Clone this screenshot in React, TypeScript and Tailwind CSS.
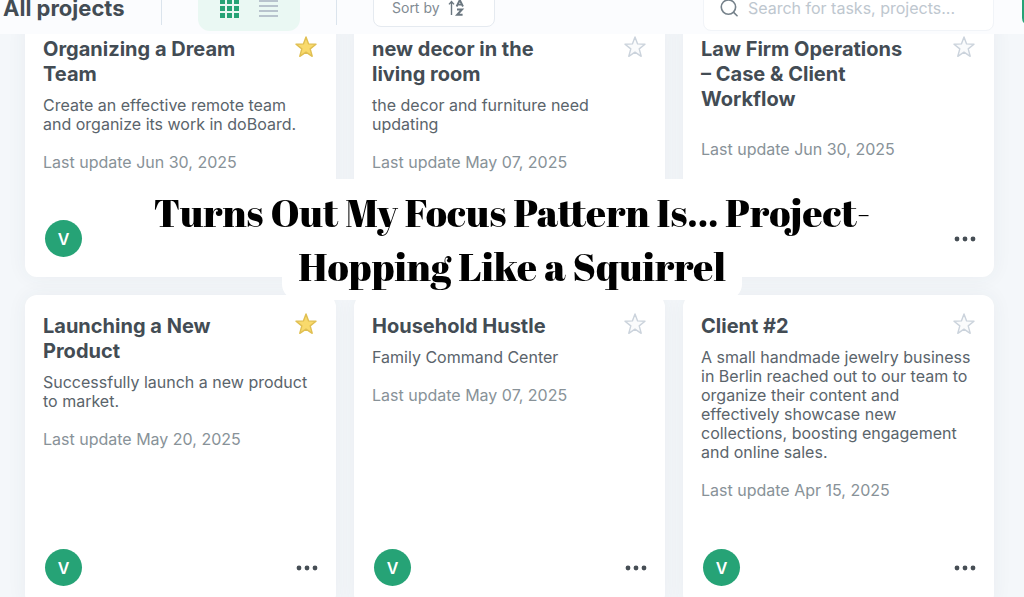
import React, { useState } from 'react';

interface Project {
  id: number;
  title: string;
  description?: string;
  updated: string;
  starred: boolean;
  owner?: string;
}

const initialProjects: Project[] = [
  {
    id: 1,
    title: 'Organizing a Dream Team',
    description: 'Create an effective remote team and organize its work in doBoard.',
    updated: 'Jun 30, 2025',
    starred: true,
    owner: 'V',
  },
  {
    id: 2,
    title: 'new decor in the living room',
    description: 'the decor and furniture need updating',
    updated: 'May 07, 2025',
    starred: false,
  },
  { id: 3, title: 'Law Firm Operations – Case & Client Workflow', updated: 'Jun 30, 2025', starred: false },
  {
    id: 4,
    title: 'Launching a New Product',
    description: 'Successfully launch a new product to market.',
    updated: 'May 20, 2025',
    starred: true,
    owner: 'V',
  },
  {
    id: 5,
    title: 'Household Hustle',
    description: 'Family Command Center',
    updated: 'May 07, 2025',
    starred: false,
    owner: 'V',
  },
  {
    id: 6,
    title: 'Client #2',
    description:
      'A small handmade jewelry business in Berlin reached out to our team to organize their content and effectively showcase new collections, boosting engagement and online sales.',
    updated: 'Apr 15, 2025',
    starred: false,
    owner: 'V',
  },
];

const StarIcon: React.FC<{ filled: boolean }> = ({ filled }) => (
  <svg
    width="22"
    height="22"
    viewBox="0 0 22 22"
    className={filled ? 'fill-[#f9da6c] stroke-[#e0bf52]' : 'fill-[#fafbfc] stroke-[#cbd3dc]'}
    strokeWidth="1.4"
    strokeLinejoin="round"
  >
    <path d="M11 1l2.6 6.9 7.4.4-5.8 4.6 2 7.4-6.2-4.2-6.2 4.2 2-7.4L1 8.3l7.4-.4z" />
  </svg>
);

const GridIcon = () => (
  <svg width="19" height="19" viewBox="0 0 19 19" fill="#26a376">
    {[0, 7, 14].map((y) => [0, 7, 14].map((x) => <rect key={`${x}-${y}`} x={x} y={y} width="5" height="5" />))}
  </svg>
);

const ListIcon = () => (
  <svg width="19" height="20" viewBox="0 0 19 20" stroke="#b8c3cd" strokeWidth="2">
    <path d="M0 3h19M0 8h19M0 13h19M0 18h19" />
  </svg>
);

const SortIcon = () => (
  <svg width="17" height="18" viewBox="0 0 17 18" fill="none" stroke="#6b7780" strokeWidth="1.4">
    <path d="M3.5 16V3M1 5.4l2.5-2.8L6 5.4" />
    <path d="M8.6 7.5l3.2-6.5 3.2 6.5M9.8 5.6h4" strokeWidth="1.9" />
    <path d="M9 10.5h5l-4.8 5.3h5.4" strokeWidth="2" />
  </svg>
);

const SearchIcon = () => (
  <svg width="20" height="20" viewBox="0 0 20 20" fill="none" stroke="#76828b" strokeWidth="1.8" strokeLinecap="round">
    <circle cx="9.4" cy="9" r="8" />
    <path d="M15.2 14.8l3.8 3.8" />
  </svg>
);

const ProjectCard: React.FC<{ project: Project; onStar: (id: number) => void }> = ({ project, onStar }) => (
  <article className="flex flex-col rounded-xl bg-white px-[18px] pt-[18px] pb-5 shadow-[0_0_20px_rgba(50,60,80,0.06)]">
    <div className="flex items-start justify-between">
      <h2 className="w-[214px] pt-px text-xl leading-[25px] font-bold text-[#434c54]">{project.title}</h2>
      <button className="mr-px" onClick={() => onStar(project.id)} aria-label="Favorite" aria-pressed={project.starred}>
        <StarIcon filled={project.starred} />
      </button>
    </div>
    <p className="mt-[9px] text-base leading-[19px] text-[#5a646b]">{project.description}</p>
    <p className="mt-[19px] text-base leading-[19px] text-[#889298]">Last update {project.updated}</p>
    <div className="mt-auto flex h-[37px] items-center justify-between">
      {project.owner && (
        <span className="ml-0.5 flex size-[37px] items-center justify-center rounded-full bg-[#26a376] text-base font-semibold text-white">
          {project.owner}
        </span>
      )}
      <button className="ml-auto" aria-label="Project menu">
        <svg width="22" height="6" viewBox="0 0 22 6" fill="#464e55">
          <circle cx="3" cy="3" r="2.4" />
          <circle cx="11" cy="3" r="2.4" />
          <circle cx="19" cy="3" r="2.4" />
        </svg>
      </button>
    </div>
  </article>
);

const Header: React.FC = () => {
  const [query, setQuery] = useState('');

  return (
    <header className="sticky top-0 z-10 flex h-[34px] items-end overflow-hidden bg-[#fbfcfe]">
      <div className="flex h-[52px] w-full shrink-0 items-center">
        <h1 className="w-[161px] shrink-0 pl-[3px] text-[22px] leading-7 font-bold whitespace-nowrap text-[#434c54]">
          All projects
        </h1>
        <span className="h-[34px] w-px bg-[#dbe4ed]" />
        <div className="ml-9 flex h-[46px] w-[102px] items-center justify-between rounded-xl bg-[#eaf8f3] px-[22px]">
          <button aria-label="Grid view">
            <GridIcon />
          </button>
          <button aria-label="List view">
            <ListIcon />
          </button>
        </div>
        <span className="ml-9 h-[34px] w-px bg-[#dbe4ed]" />
        <button className="ml-9 flex h-[38px] w-[122px] items-center gap-2 rounded-lg border border-[#e5eaf0] bg-white pl-[18px] text-sm text-[#818b93]">
          Sort by
          <SortIcon />
        </button>
        <label className="ml-auto flex h-[46px] w-[291px] items-center gap-2.5 rounded-lg border border-[#f1f4f8] bg-white pl-4">
          <SearchIcon />
          <input
            type="text"
            value={query}
            onChange={(e) => setQuery(e.target.value)}
            placeholder="Search for tasks, projects..."
            aria-label="Search"
            className="w-full min-w-0 text-base text-[#5a646b] outline-none placeholder:text-[#bec7cf]"
          />
        </label>
        <div className="ml-7 w-0.5 shrink-0">
          <button aria-label="Add project" className="h-[42px] w-32 rounded-lg bg-[#26a376]" />
        </div>
      </div>
    </header>
  );
};

const App: React.FC = () => {
  const [projects, setProjects] = useState(initialProjects);

  const toggleStar = (id: number) => {
    setProjects(projects.map((p) => (p.id === id ? { ...p, starred: !p.starred } : p)));
  };

  return (
    <div className="relative h-screen overflow-hidden bg-[#f4f7fa] font-['Inter',sans-serif]">
      <Header />
      <main className="-mt-4 grid grid-cols-3 grid-rows-[259px_311px] gap-[18px] pr-[30px] pl-[25px]">
        {projects.map((project) => (
          <ProjectCard key={project.id} project={project} onStar={toggleStar} />
        ))}
      </main>

      {/* caption over the board */}
      <div className="pointer-events-none absolute inset-x-0 top-[179px] z-20 flex flex-col items-center text-center font-['Abril_Fatface','Liberation_Serif',serif] text-[39px] leading-[54px] whitespace-nowrap text-black">
        <span className="rounded-2xl bg-white px-4 pt-1.5">Turns Out My Focus Pattern Is... Project-</span>
        <span className="rounded-b-2xl bg-white px-4 pb-[7px]">Hopping Like a Squirrel</span>
      </div>
    </div>
  );
};

export default App;
